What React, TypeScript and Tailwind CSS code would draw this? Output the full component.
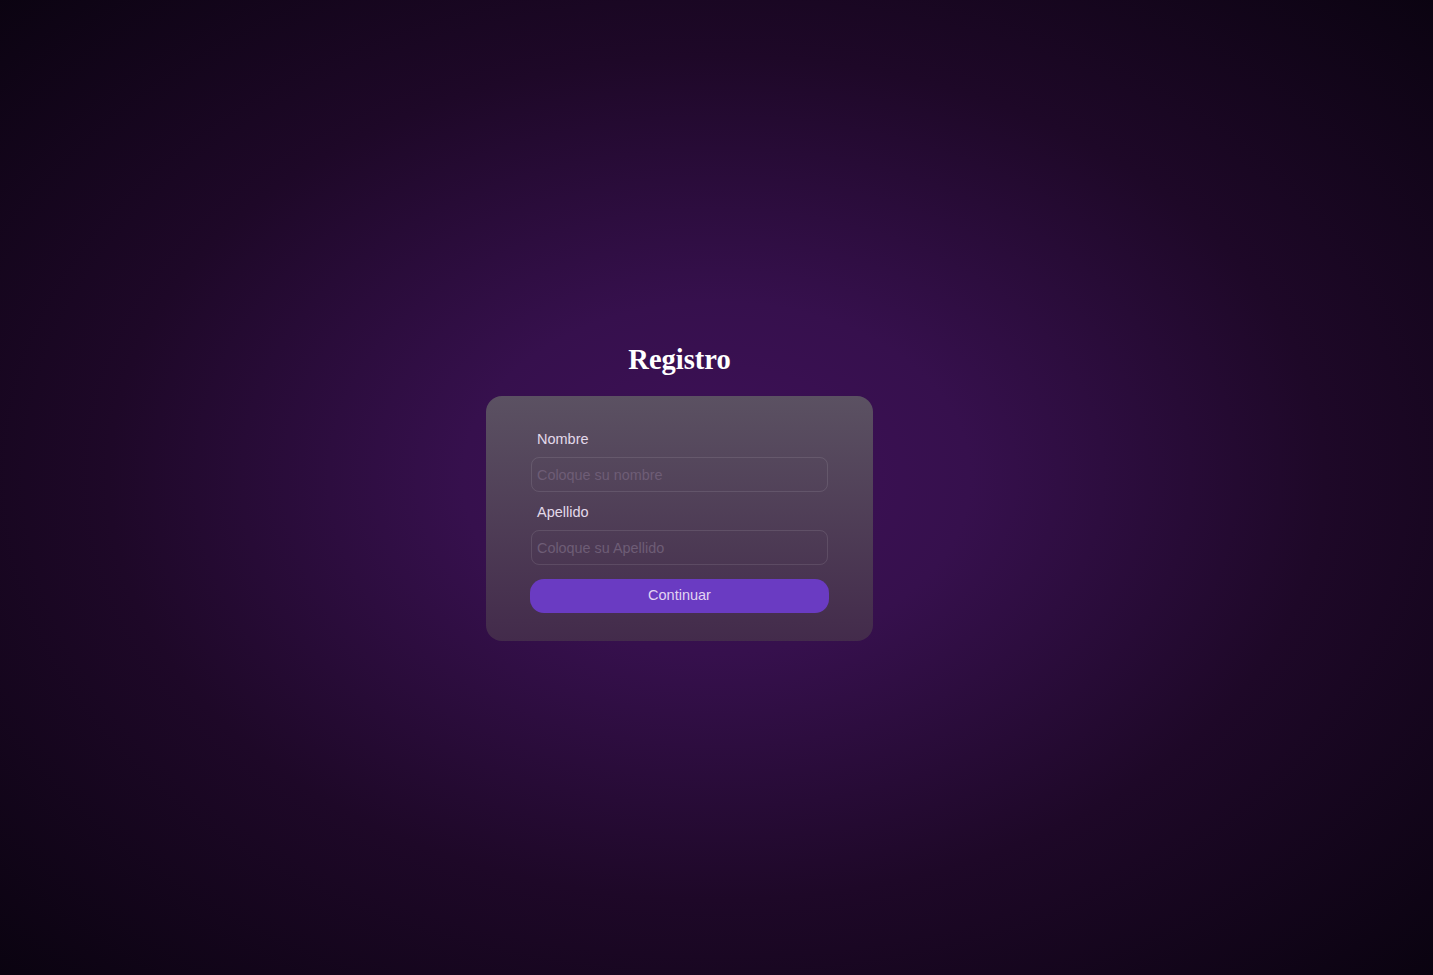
export default function App() {
  return (
    <div className="min-h-screen w-full flex items-center justify-center pr-[74px] bg-[radial-gradient(ellipse_at_50%_49%,#3e1058_0%,#36104d_25%,#1e0828_60%,#0a0310_100%)] font-['Liberation_Sans',Arial,sans-serif]">
      <div className="flex flex-col items-center">
        <h1 className="text-[28.5px] leading-[34px] font-bold text-white font-['Liberation_Serif','Times_New_Roman',serif] mt-[9px] mb-[19px]">
          Registro
        </h1>
        <form
          className="w-[387px] rounded-[16px] bg-gradient-to-b from-[#5b5162] to-[#432b4b] px-[44px] pt-[35px] pb-[28px] flex flex-col"
          onSubmit={(e) => e.preventDefault()}
        >
          <label className="text-[14.5px] text-[#e3d9ea] pl-[7px] leading-[17px] mb-[9px]">Nombre</label>
          <input
            type="text"
            placeholder="Coloque su nombre"
            className="mx-px h-[35px] rounded-[8px] border border-white/10 bg-transparent px-[5px] text-[14.4px] text-white placeholder:text-[#6e5d76] outline-none"
          />
          <label className="text-[14.5px] text-[#e3d9ea] pl-[7px] leading-[17px] mt-[12px] mb-[9px]">Apellido</label>
          <input
            type="text"
            placeholder="Coloque su Apellido"
            className="mx-px h-[35px] rounded-[8px] border border-white/10 bg-transparent px-[5px] text-[14.4px] text-white placeholder:text-[#6e5d76] outline-none"
          />
          <button
            type="submit"
            className="mt-[14px] w-full h-[34px] rounded-[14px] bg-[#6a3bc2] text-[14.5px] text-[#e2d4f2]"
          >
            Continuar
          </button>
        </form>
      </div>
    </div>
  )
}
